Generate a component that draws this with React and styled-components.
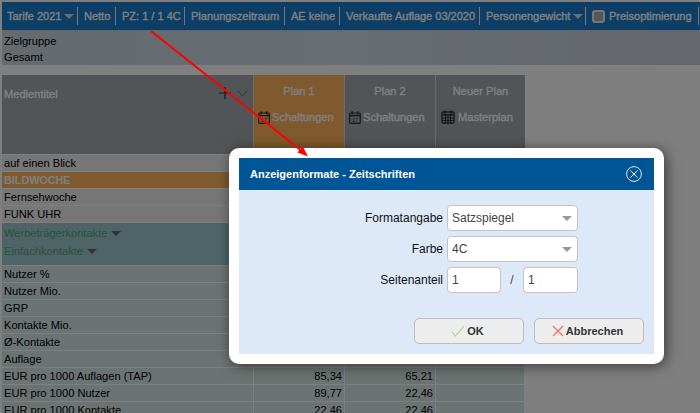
import React from "react";
import styled, { createGlobalStyle } from "styled-components";

const GlobalStyle = createGlobalStyle`
  html, body {
    margin: 0;
    padding: 0;
    background: #fff;
    font-family: "Liberation Sans", Arial, sans-serif;
    font-size: 11.1px;
  }
`;

const Page = styled.div`
  position: relative;
  width: 700px;
  height: 413px;
  overflow: hidden;
  background: #fff;
  padding: 2px 0 0 2px;
  box-sizing: border-box;
`;

const Toolbar = styled.div`
  display: flex;
  align-items: center;
  height: 28px;
  background: #187ccc;
  border-bottom: 1px solid #c6ccd0;
  color: #fff;
  font-size: 11px;
  -webkit-text-stroke: 0.35px #fff;
`;

const ToolItem = styled.div`
  display: flex;
  align-items: center;
  gap: 3px;
  flex: none;
  width: ${(p) => p.$w}px;
  height: 18px;
  padding-left: ${(p) => (p.$first ? 5 : 6)}px;
  box-sizing: border-box;
  border-right: 1px solid #e8eef2;
  white-space: nowrap;
`;

const Caret = styled.span`
  display: inline-block;
  flex: none;
  width: 0;
  height: 0;
  border-left: 5px solid transparent;
  border-right: 5px solid transparent;
  border-top: 5px solid ${(p) => p.$color || "#d6dde2"};
`;

const Check = styled.span`
  display: inline-block;
  width: 9px;
  height: 9px;
  margin-right: 1px;
  background: #aeaeae;
  border: 2px solid #f0f0f0;
  border-radius: 3px;
`;

const Target = styled.div`
  height: 34px;
  padding: 2px;
  box-sizing: border-box;
  background: linear-gradient(90deg, #ccd6e0, #d0dae6 50%, #c8d0da);
  color: #000;
  line-height: 16px;
`;

const Table = styled.div`
  margin-top: 10px;
  display: grid;
  grid-template-columns: 252px 91px 91px 89px;
  width: 523px;
`;

const HeadTitle = styled.div`
  position: relative;
  height: 79px;
  background: #a2aab0;
  border-right: 1px solid #ddd;
  padding: 12px 2px;
  box-sizing: border-box;
  color: #fff;
  font-size: 11.1px;
  -webkit-text-stroke: 0.35px #fff;
  line-height: 14px;
`;

const HeadTools = styled.div`
  position: absolute;
  top: 12px;
  right: 5px;
  display: flex;
  align-items: center;
  gap: 6px;
`;

const HeadPlan = styled.div`
  height: 79px;
  background: ${(p) => (p.$active ? "#ffb45c" : "#a2aab0")};
  border-right: ${(p) => (p.$last ? "none" : "1px solid #ddd")};
  box-sizing: border-box;
  color: #fff;
  font-size: 11.1px;
  -webkit-text-stroke: 0.35px #fff;
  text-align: center;
`;

const PlanName = styled.div`
  margin-top: 9px;
  line-height: 14px;
`;

const PlanAction = styled.div`
  margin-top: 12px;
  padding-left: ${(p) => (p.$grid ? 5 : 4)}px;
  display: flex;
  align-items: center;
  gap: ${(p) => (p.$grid ? 3 : 2)}px;
  line-height: 14px;
`;

const Cell = styled.div`
  height: 17px;
  box-sizing: border-box;
  padding: 0 2px;
  line-height: 16px;
  color: ${(p) => (p.$hi ? "#fff" : "#000")};
  font-weight: ${(p) => (p.$hi ? "bold" : "normal")};
  font-size: ${(p) => (p.$hi ? "10.8px" : "inherit")};
  text-align: ${(p) => (p.$num ? "right" : "left")};
  background: ${(p) =>
    p.$hi ? "#ffb45c" : p.$metric ? "#d8e6e6" : "#efefef"};
  border-top: 1px solid #fff;
  border-right: 1px solid #fff;
  overflow: hidden;
  white-space: nowrap;
`;

const KontaktBlock = styled.div`
  grid-column: 1 / span 4;
  height: 43px;
  box-sizing: border-box;
  background: #9cc9cf;
  border-top: 1px solid #fff;
  padding: 3px 2px;
  display: flex;
  flex-direction: column;
  gap: 4px;
  color: #4fa870;
  line-height: 14px;
`;

const KontaktLine = styled.div`
  display: flex;
  align-items: center;
  gap: 4px;
`;

const Overlay = styled.div`
  position: absolute;
  inset: 0;
  background: rgba(0, 0, 0, 0.5);
`;

const Arrow = styled.svg`
  position: absolute;
  left: 0;
  top: 0;
  z-index: 3;
`;

const Modal = styled.div`
  position: absolute;
  left: 229px;
  top: 148px;
  width: 435px;
  height: 216px;
  box-sizing: border-box;
  padding: 10px;
  background: #fff;
  border-radius: 10px;
  box-shadow: 2px 2px 14px rgba(0, 0, 0, 0.55);
  z-index: 2;
`;

const ModalInner = styled.div`
  height: 100%;
  display: flex;
  flex-direction: column;
  background: #dde8f9;
`;

const ModalHead = styled.div`
  display: flex;
  align-items: center;
  justify-content: space-between;
  height: 32px;
  padding: 0 12px 0 11px;
  background: #005596;
  color: #fff;
  font-size: 11px;
  font-weight: bold;
`;

const Form = styled.div`
  display: grid;
  grid-template-columns: 204px 131px;
  column-gap: 4px;
  row-gap: 5px;
  margin-top: 15px;
  align-items: center;
`;

const Label = styled.label`
  font-size: 12px;
  color: #111;
  text-align: right;
`;

const Field = styled.div`
  display: flex;
  align-items: center;
  justify-content: space-between;
  height: 26px;
  box-sizing: border-box;
  padding: 0 5px 0 4px;
  background: #fff;
  border: 1px solid #c4c4c4;
  border-radius: 4px;
  font-size: 12px;
  color: #444;
`;

const Pair = styled.div`
  display: grid;
  grid-template-columns: 54px 22px 55px;
  align-items: center;
`;

const Slash = styled.span`
  font-size: 12px;
  color: #444;
  text-align: center;
`;

const Buttons = styled.div`
  display: flex;
  justify-content: flex-end;
  gap: 10px;
  margin-top: 25px;
  padding-right: 10px;
`;

const Button = styled.button`
  display: flex;
  align-items: center;
  justify-content: center;
  gap: 2px;
  width: 110px;
  height: 26px;
  padding: 0 3px 0 0;
  background: #ededed;
  border: 1px solid #bdbdbd;
  border-radius: 5px;
  font-family: inherit;
  font-size: 11px;
  font-weight: bold;
  color: #333;
`;

const CalendarIcon = ({ color = "#333" }) => (
  <svg width="12" height="13" viewBox="0 0 12 13" fill="none">
    <rect x="0.7" y="2" width="10.6" height="10.3" rx="1" stroke={color} strokeWidth="1.2" />
    <path d="M1 4.6h10" stroke={color} strokeWidth="1.4" />
    <path d="M3.3 0.3v3M8.7 0.3v3" stroke={color} strokeWidth="1.5" />
    <text x="6" y="11" fontSize="5.5" textAnchor="middle" fill={color} stroke="none">
      17
    </text>
  </svg>
);

const MonthIcon = ({ color = "#2a2a2a" }) => (
  <svg width="14" height="14" viewBox="0 0 14 14" fill="none">
    <rect x="1" y="2" width="12" height="11" rx="1" stroke={color} strokeWidth="1.3" />
    <path d="M1 4.8h12" stroke={color} strokeWidth="1.5" />
    <path d="M4 0.5v3M10 0.5v3" stroke={color} strokeWidth="1.6" />
    <path d="M1 8h12M1 10.5h12M4.5 5v8M7 5v8M9.5 5v8" stroke={color} strokeWidth="1" />
  </svg>
);

const rows = [
  { label: "Nutzer %" },
  { label: "Nutzer Mio." },
  { label: "GRP" },
  { label: "Kontakte Mio." },
  { label: "Ø-Kontakte" },
  { label: "Auflage" },
  { label: "EUR pro 1000 Auflagen (TAP)", a: "85,34", b: "65,21" },
  { label: "EUR pro 1000 Nutzer", a: "89,77", b: "22,46" },
  { label: "EUR pro 1000 Kontakte", a: "22,46", b: "22,46" },
];

const titles = ["auf einen Blick", "BILDWOCHE", "Fernsehwoche", "FUNK UHR"];

const App = () => (
  <Page>
    <GlobalStyle />
    <Toolbar>
      <ToolItem $w={76} $first>
        Tarife 2021 <Caret />
      </ToolItem>
      <ToolItem $w={38}>Netto</ToolItem>
      <ToolItem $w={69}>PZ: 1 / 1 4C</ToolItem>
      <ToolItem $w={100}>Planungszeitraum</ToolItem>
      <ToolItem $w={55}>AE keine</ToolItem>
      <ToolItem $w={140}>Verkaufte Auflage 03/2020</ToolItem>
      <ToolItem $w={106}>
        Personengewicht <Caret />
      </ToolItem>
      <ToolItem $w={113}>
        <Check />
        Preisoptimierung
      </ToolItem>
    </Toolbar>
    <Target>
      Zielgruppe
      <br />
      Gesamt
    </Target>
    <Table>
      <HeadTitle>
        Medientitel
        <HeadTools>
          <svg width="12" height="12" viewBox="0 0 12 12">
            <path d="M6 0v12M0 6h12" stroke="#333" strokeWidth="1.2" />
          </svg>
          <svg width="11" height="7" viewBox="0 0 11 7" fill="none">
            <path d="M0.5 0.5L5.5 6L10.5 0.5" stroke="#666" />
          </svg>
        </HeadTools>
      </HeadTitle>
      <HeadPlan $active>
        <PlanName>Plan 1</PlanName>
        <PlanAction>
          <CalendarIcon />
          Schaltungen
        </PlanAction>
      </HeadPlan>
      <HeadPlan>
        <PlanName>Plan 2</PlanName>
        <PlanAction>
          <CalendarIcon />
          Schaltungen
        </PlanAction>
      </HeadPlan>
      <HeadPlan $last>
        <PlanName>Neuer Plan</PlanName>
        <PlanAction $grid>
          <MonthIcon />
          Masterplan
        </PlanAction>
      </HeadPlan>
      {titles.map((t) => (
        <React.Fragment key={t}>
          <Cell $hi={t === "BILDWOCHE"}>{t}</Cell>
          <Cell $hi={t === "BILDWOCHE"} />
          <Cell $hi={t === "BILDWOCHE"} />
          <Cell $hi={t === "BILDWOCHE"} />
        </React.Fragment>
      ))}
      <KontaktBlock>
        <KontaktLine>
          Werbeträgerkontakte <Caret $color="#666" />
        </KontaktLine>
        <KontaktLine>
          Einfachkontakte <Caret $color="#666" />
        </KontaktLine>
      </KontaktBlock>
      {rows.map((r) => (
        <React.Fragment key={r.label}>
          <Cell $metric>{r.label}</Cell>
          <Cell $metric $num>{r.a}</Cell>
          <Cell $metric $num>{r.b}</Cell>
          <Cell $metric />
        </React.Fragment>
      ))}
    </Table>
    <Overlay />
    <Arrow width="700" height="413">
      <path d="M151 31L303 152" stroke="#f00" strokeWidth="2" />
      <path d="M308 156.5L297.5 152.5L302.5 146Z" fill="#f00" />
    </Arrow>
    <Modal>
      <ModalInner>
        <ModalHead>
          Anzeigenformate - Zeitschriften
          <svg width="16" height="16" viewBox="0 0 16 16" fill="none">
            <circle cx="8" cy="8" r="7.4" stroke="#dfe8f2" />
            <path d="M4.5 4.5l7 7M11.5 4.5l-7 7" stroke="#fff" />
          </svg>
        </ModalHead>
        <Form>
          <Label>Formatangabe</Label>
          <Field>
            Satzspiegel
            <Caret $color="#999" />
          </Field>
          <Label>Farbe</Label>
          <Field>
            4C
            <Caret $color="#999" />
          </Field>
          <Label>Seitenanteil</Label>
          <Pair>
            <Field>1</Field>
            <Slash>/</Slash>
            <Field>1</Field>
          </Pair>
        </Form>
        <Buttons>
          <Button>
            <svg width="14" height="12" viewBox="0 0 14 12" fill="none">
              <path d="M1 7l3.5 4L13 1" stroke="#a9cf8c" strokeWidth="1.1" />
            </svg>
            OK
          </Button>
          <Button>
            <svg width="12" height="12" viewBox="0 0 12 12" fill="none">
              <path d="M1 1l10 10M11 1L1 11" stroke="#f0705a" strokeWidth="1.1" />
            </svg>
            Abbrechen
          </Button>
        </Buttons>
      </ModalInner>
    </Modal>
  </Page>
);

export default App;
